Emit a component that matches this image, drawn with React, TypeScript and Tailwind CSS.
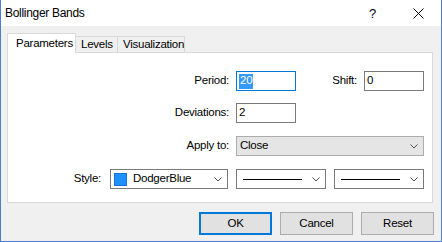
import React from "react";

function Chevron() {
  return (
    <svg width="8" height="5" viewBox="0 0 8 5" className="shrink-0">
      <polyline points="0.5,0.5 4,4 7.5,0.5" fill="none" stroke="#505050" strokeWidth="1" />
    </svg>
  );
}

function TextInput({ value, focused, selected }: { value: string; focused?: boolean; selected?: boolean }) {
  return (
    <div
      className={`w-[60px] h-[20px] bg-white border flex items-center pl-[2px] leading-none ${
        focused ? "border-[#0078d7]" : "border-[#7a7a7a]"
      }`}
    >
      {selected ? (
        <span className="bg-[#3399ff] text-white h-[15px] flex items-center px-[1px]">{value}</span>
      ) : (
        <span className="text-black">{value}</span>
      )}
    </div>
  );
}

function LineSelect() {
  return (
    <div className="w-[90px] h-[20px] bg-white border border-[#7a7a7a] flex items-center pl-[6px] pr-[5px]">
      <div className="w-[59px] h-px bg-black" />
      <div className="ml-auto">
        <Chevron />
      </div>
    </div>
  );
}

export default function App() {
  return (
    <div className="w-[442px] h-[242px] bg-[#f0f0f0] border-l border-r border-b border-[#4a7fcf] flex flex-col font-['Liberation_Sans',Arial,sans-serif] text-[11.5px] tracking-[-0.25px] text-black overflow-hidden">
      {/* Title bar */}
      <div className="h-[26px] bg-white flex items-center shrink-0">
        <span className="pl-[4px] text-[12px] tracking-[-0.3px] text-black">Bollinger Bands</span>
        <span className="ml-auto text-[13px] text-black leading-none">?</span>
        <svg width="11" height="11" viewBox="0 0 11 11" className="ml-[37px] mr-[17px]">
          <line x1="0.5" y1="0.5" x2="10.5" y2="10.5" stroke="#000" strokeWidth="1" />
          <line x1="10.5" y1="0.5" x2="0.5" y2="10.5" stroke="#000" strokeWidth="1" />
        </svg>
      </div>

      {/* Body */}
      <div className="pl-[6px] flex flex-col">
        {/* Tabs */}
        <div className="mt-[7px] h-[19px] flex items-end">
          <div className="relative z-10 w-[69px] h-[20px] -mb-px bg-white border-l border-t border-r border-[#d9d9d9] flex items-center pl-[8px] whitespace-nowrap">
            Parameters
          </div>
          <div className="w-[42px] h-[16px] bg-[#f0f0f0] border-t border-r border-[#d9d9d9] flex items-center pl-[5px] whitespace-nowrap">
            Levels
          </div>
          <div className="w-[67px] h-[16px] bg-[#f0f0f0] border-t border-r border-[#d9d9d9] flex items-center pl-[5px] whitespace-nowrap">
            Visualization
          </div>
        </div>

        {/* Panel */}
        <div className="w-[426px] bg-white border border-[#d9d9d9] pt-[18px] pb-[13px] flex flex-col">
          {/* Row 1 */}
          <div className="h-[20px] flex items-center">
            <div className="w-[221px] text-right">Period:</div>
            <div className="ml-[7px]">
              <TextInput value="20" focused selected />
            </div>
            <div className="w-[61px] text-right">Shift:</div>
            <div className="ml-[7px]">
              <TextInput value="0" />
            </div>
          </div>
          {/* Row 2 */}
          <div className="mt-[12px] h-[20px] flex items-center">
            <div className="w-[221px] text-right">Deviations:</div>
            <div className="ml-[7px]">
              <TextInput value="2" />
            </div>
          </div>
          {/* Row 3 */}
          <div className="mt-[13px] h-[20px] flex items-center">
            <div className="w-[221px] text-right">Apply to:</div>
            <div className="ml-[7px] w-[188px] h-[20px] bg-[#e5e5e5] border border-[#adadad] flex items-center pl-[3px] pr-[5px]">
              <span>Close</span>
              <div className="ml-auto">
                <Chevron />
              </div>
            </div>
          </div>
          {/* Row 4 */}
          <div className="mt-[13px] h-[20px] flex items-center">
            <div className="w-[93px] text-right">Style:</div>
            <div className="ml-[9px] w-[118px] h-[20px] bg-white border border-[#7a7a7a] flex items-center pl-[3px] pr-[5px]">
              <div className="w-[13px] h-[13px] bg-[#1e90ff] border border-[#1873d6]" />
              <span className="ml-[6px]">DodgerBlue</span>
              <div className="ml-auto">
                <Chevron />
              </div>
            </div>
            <div className="ml-[8px]">
              <LineSelect />
            </div>
            <div className="ml-[8px]">
              <LineSelect />
            </div>
          </div>
        </div>

        {/* Buttons */}
        <div className="mt-[9px] flex justify-end pr-[7px] gap-[8px]">
          <button className="w-[73px] h-[23px] bg-[#e1e1e1] border-2 border-[#0078d7] text-black">
            OK
          </button>
          <button className="w-[73px] h-[23px] bg-[#e1e1e1] border border-[#adadad] text-black">
            Cancel
          </button>
          <button className="w-[73px] h-[23px] bg-[#e1e1e1] border border-[#adadad] text-black">
            Reset
          </button>
        </div>
      </div>
    </div>
  );
}
